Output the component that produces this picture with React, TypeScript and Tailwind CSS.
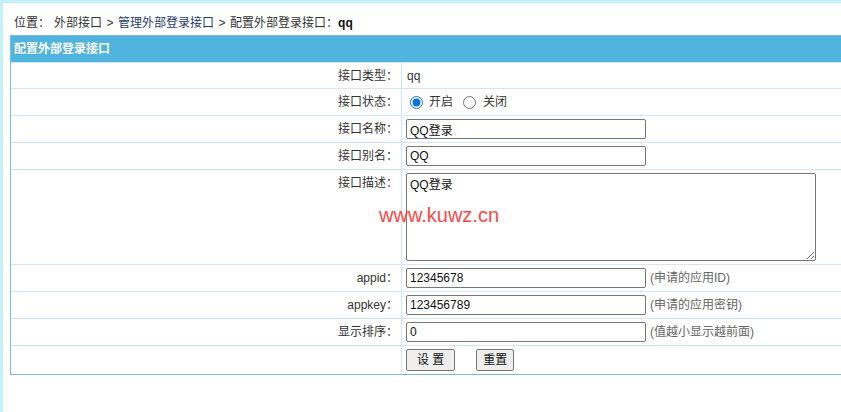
import React from 'react';

const font = "font-['Liberation_Sans','Noto_Sans_CJK_SC',sans-serif]";

const inputCls =
  'h-[20px] w-[240px] border border-[#767676] rounded-[2px] px-[3px] text-[12px] text-[#111] bg-white outline-none';

function Row({
  label,
  children,
  tall,
  className = 'h-[27px]',
}: {
  label: string;
  children?: React.ReactNode;
  tall?: boolean;
  className?: string;
}) {
  return (
    <div className={`flex border-t border-[#cfe8f7] ${className}`}>
      <div
        className={`w-[391px] shrink-0 border-r border-[#cfe8f7] text-right pr-[3px] leading-[18px] ${
          tall ? 'pt-[4px]' : 'flex items-center justify-end'
        }`}
      >
        {label}
      </div>
      <div className="flex-1 flex items-center pl-[4px]">{children}</div>
    </div>
  );
}

function Sep() {
  return <span className="mx-[4.5px]">&gt;</span>;
}

export default function App() {
  return (
    <div
      className={`relative min-h-[412px] bg-white border-l-[3px] border-t-[3px] border-[#c3f1fa] text-[12px] text-[#333] ${font}`}
    >
      <div className="pt-[11px] pb-[3px] pl-[11px] leading-[18px] whitespace-pre">
        位置：<span className="ml-[4px]">外部接口</span>
        <Sep />
        <span className="text-[#1d3b72]">管理外部登录接口</span>
        <Sep />
        配置外部登录接口：<b className="text-[#111]">qq</b>
      </div>

      <div className="overflow-hidden pl-[7px]">
        <div className="w-[calc(100%+10px)] border border-[#7db9e4]">
          <div className="h-[26px] bg-[#4fb4de] text-white font-bold flex items-center pl-[3px]">
            配置外部登录接口
          </div>

          <Row label="接口类型：" className="h-[26px]">
            <span className="pl-[1px]">qq</span>
          </Row>

          <Row label="接口状态：">
            <label className="flex items-center ml-[4px]">
              <input type="radio" name="status" defaultChecked className="m-0 w-[13px] h-[13px] accent-[#0b6fe8]" />
              <span className="ml-[6px]">开启</span>
            </label>
            <label className="flex items-center ml-[10px]">
              <input type="radio" name="status" className="m-0 w-[13px] h-[13px]" />
              <span className="ml-[7px]">关闭</span>
            </label>
          </Row>

          <Row label="接口名称：">
            <input className={inputCls} defaultValue="QQ登录" />
          </Row>

          <Row label="接口别名：">
            <input className={inputCls} defaultValue="QQ" />
          </Row>

          <Row label="接口描述：" tall className="h-[95px]">
            <textarea
              className="self-start mt-[3px] h-[88px] w-[410px] border border-[#767676] rounded-[2px] px-[3px] pt-[2px] text-[12px] text-[#111] leading-[18px] outline-none"
              defaultValue="QQ登录"
            />
          </Row>

          <Row label="appid：">
            <input className={inputCls} defaultValue="12345678" />
            <span className="ml-[4px] text-[#666]">(申请的应用ID)</span>
          </Row>

          <Row label="appkey：">
            <input className={inputCls} defaultValue="123456789" />
            <span className="ml-[4px] text-[#666]">(申请的应用密钥)</span>
          </Row>

          <Row label="显示排序：">
            <input className={inputCls} defaultValue="0" />
            <span className="ml-[4px] text-[#666]">(值越小显示越前面)</span>
          </Row>

          <Row label="" className="h-[29px]">
            <button className="h-[22px] px-[10px] bg-[#efefef] border border-[#767676] rounded-[2px] text-[#111] whitespace-pre">
              设 置
            </button>
            <button className="ml-[21px] h-[22px] px-[6px] bg-[#efefef] border border-[#767676] rounded-[2px] text-[#111]">
              重置
            </button>
          </Row>
        </div>
      </div>

      <div className="absolute left-[376px] top-[202px] text-[20px] leading-[20px] text-[#ff4646] font-['Liberation_Sans',sans-serif]">
        www.kuwz.cn
      </div>
    </div>
  );
}
